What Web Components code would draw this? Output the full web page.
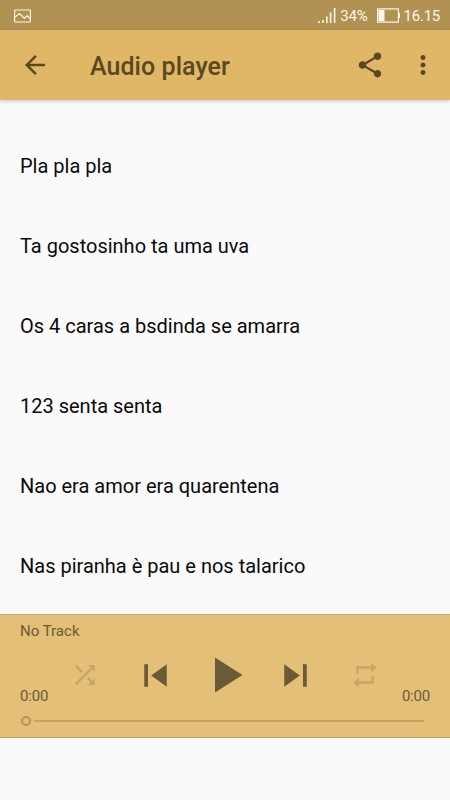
<!DOCTYPE html>
<html lang="pt">
<head>
<meta charset="utf-8">
<title>Audio player</title>
<style>
  body {
    margin: 0;
    background: #fafafa;
    font-family: Roboto, "Noto Sans", sans-serif;
  }
</style>
</head>
<body>
<audio-app>
  <status-bar slot="status" battery="34%" time="16.15"></status-bar>
  <app-toolbar slot="toolbar">Audio player</app-toolbar>
  <track-item>Pla pla pla</track-item>
  <track-item>Ta gostosinho ta uma uva</track-item>
  <track-item>Os 4 caras a bsdinda se amarra</track-item>
  <track-item>123 senta senta</track-item>
  <track-item>Nao era amor era quarentena</track-item>
  <track-item>Nas piranha è pau e nos talarico</track-item>
  <player-controls slot="player" elapsed="0:00" duration="0:00">No Track</player-controls>
</audio-app>

<script>
const ICONS = {
  back: "M20 11H7.83l5.59-5.59L12 4l-8 8 8 8 1.41-1.41L7.83 13H20v-2z",
  share: "M18 16.08c-.76 0-1.44.3-1.96.77L8.91 12.7c.05-.23.09-.46.09-.7s-.04-.47-.09-.7l7.05-4.11c.54.5 1.25.81 2.04.81 1.66 0 3-1.34 3-3s-1.34-3-3-3-3 1.34-3 3c0 .24.04.47.09.7L8.04 9.81C7.5 9.31 6.79 9 6 9c-1.66 0-3 1.34-3 3s1.34 3 3 3c.79 0 1.5-.31 2.04-.81l7.12 4.16c-.05.21-.08.43-.08.65 0 1.61 1.31 2.92 2.92 2.92s2.92-1.31 2.92-2.92-1.31-2.92-2.92-2.92z",
  more: "M12 8c1.1 0 2-.9 2-2s-.9-2-2-2-2 .9-2 2 .9 2 2 2zm0 2c-1.1 0-2 .9-2 2s.9 2 2 2 2-.9 2-2-.9-2-2-2zm0 6c-1.1 0-2 .9-2 2s.9 2 2 2 2-.9 2-2-.9-2-2-2z",
  shuffle: "M10.59 9.17L5.41 4 4 5.41l5.17 5.17 1.42-1.41zM14.5 4l2.04 2.04L4 18.59 5.41 20 17.96 7.46 20 9.5V4h-5.5zm.33 9.41l-1.41 1.41 3.13 3.13L14.5 20H20v-5.5l-2.04 2.04-3.13-3.13z",
  previous: "M6 6h2v12H6zm3.7 6l8.3 6V6z",
  play: "M8 5v14l11-7z",
  next: "M6 18l8.3-6L6 6v12zM16 6v12h2V6h-2z",
  repeat: "M7 7h10v3l4-4-4-4v3H5v6h2V7zm10 10H7v-3l-4 4 4 4v-3h12v-6h-2v4z"
};

class AppIcon extends HTMLElement {
  constructor() {
    super();
    this.attachShadow({mode: "open"});
  }
  connectedCallback() {
    const size = this.getAttribute("size") || 30;
    this.shadowRoot.innerHTML = `
      <style>
        :host { display: block; width: ${size}px; height: ${size}px; }
        svg { display: block; fill: currentColor; }
      </style>
      <svg width="${size}" height="${size}" viewBox="0 0 24 24">
        <path d="${ICONS[this.getAttribute("name")]}"/>
      </svg>
    `;
  }
}
customElements.define("app-icon", AppIcon);

class StatusBar extends HTMLElement {
  constructor() {
    super();
    this.attachShadow({mode: "open"});
  }
  connectedCallback() {
    this.shadowRoot.innerHTML = `
      <style>
        :host {
          display: flex;
          align-items: center;
          box-sizing: border-box;
          height: 30px;
          padding: 2px 10px 0 14px;
          background: #b29252;
          color: #fbf7ec;
          font-size: 15px;
          line-height: 28px;
        }
        svg { display: block; flex: none; margin-top: -1px; fill: none; stroke: currentColor; }
        .signal { margin-left: auto; }
        .battery { margin: -1px 4px 0 9px; }
        .level { margin-left: 4px; letter-spacing: -0.2px; }
        .time { letter-spacing: -0.25px; }
      </style>
      <svg width="17" height="14" viewBox="0 0 17 14">
        <rect x=".6" y="1" width="15.8" height="12" rx=".8" stroke-width="1.2"/>
        <path d="M1 8l4.500-3.500 5 5 2.500-2.800 3.400 3.200" stroke-width="1.200"/>
      </svg>
      <svg class="signal" width="18" height="16" viewBox="0 0 18 16">
        <path d="M1.200 13v2M5 12v3M8.800 8.500v6.500M12.600 4.500v10.500M16.600 0v15" stroke-width="1.600"/>
      </svg>
      <span class="level">${this.getAttribute("battery")}</span>
      <svg class="battery" width="23" height="15" viewBox="0 0 23 15">
        <rect x=".6" y=".9" width="20.800" height="13.200" stroke-width="1.200"/>
        <path d="M22.300 5v5" stroke-width="1.400"/>
        <path d="M1.500 2h6v11h-6z" fill="currentColor" stroke="none"/>
      </svg>
      <span class="time">${this.getAttribute("time")}</span>
    `;
  }
}
customElements.define("status-bar", StatusBar);

class AppToolbar extends HTMLElement {
  constructor() {
    super();
    this.attachShadow({mode: "open"});
  }
  connectedCallback() {
    this.shadowRoot.innerHTML = `
      <style>
        :host {
          display: flex;
          align-items: center;
          box-sizing: border-box;
          height: 70px;
          padding: 0 12px 0 20px;
          background: #e0b766;
          color: #5a4823;
          box-shadow: 0 1px 4px rgba(0, 0, 0, 0.22);
        }
        h1 {
          flex: 1;
          margin: 4px 0 0 40px;
          font-size: 25px;
          font-weight: 500;
          line-height: 30px;
          letter-spacing: 0.06px;
        }
        .more { margin-left: 23px; }
      </style>
      <app-icon name="back"></app-icon>
      <h1><slot></slot></h1>
      <app-icon name="share"></app-icon>
      <app-icon class="more" name="more"></app-icon>
    `;
  }
}
customElements.define("app-toolbar", AppToolbar);

class TrackItem extends HTMLElement {
  constructor() {
    super();
    this.attachShadow({mode: "open"});
  }
  connectedCallback() {
    this.shadowRoot.innerHTML = `
      <style>
        :host {
          display: flex;
          align-items: center;
          height: 80px;
          padding: 0 20px;
          color: #0a0a0a;
          font-size: 20px;
          line-height: 24px;
        }
      </style>
      <slot></slot>
    `;
  }
}
customElements.define("track-item", TrackItem);

class PlayerControls extends HTMLElement {
  constructor() {
    super();
    this.attachShadow({mode: "open"});
  }
  connectedCallback() {
    this.shadowRoot.innerHTML = `
      <style>
        :host {
          display: flex;
          flex-direction: column;
          box-sizing: border-box;
          height: 124px;
          padding: 0 20px;
          border-top: 1px solid #c9aa6c;
          border-bottom: 1px solid #c0a060;
          background: #e3bf77;
          color: #6b5a37;
          font-size: 15px;
          line-height: 18px;
        }
        .track { padding-top: 7px; height: 20px; }
        .row {
          display: grid;
          grid-template-columns: 30px repeat(5, 70px) 30px;
          align-items: center;
          height: 66px;
        }
        .row app-icon { justify-self: center; }
        .row .off { color: #c8a664; }
        .time { align-self: end; padding-bottom: 3px; letter-spacing: -0.2px; }
        .end { justify-self: end; }
        .seek {
          display: flex;
          align-items: center;
          gap: 3px;
          height: 26px;
          padding: 0 6px 0 1px;
        }
        .thumb {
          box-sizing: border-box;
          width: 10px;
          height: 10px;
          border: 2px solid #b3935a;
          border-radius: 50%;
        }
        .line { flex: 1; height: 2px; background: #c4a262; }
      </style>
      <div class="track"><slot></slot></div>
      <div class="row">
        <span class="time">${this.getAttribute("elapsed")}</span>
        <app-icon class="off" name="shuffle"></app-icon>
        <app-icon name="previous" size="45"></app-icon>
        <app-icon name="play" size="60"></app-icon>
        <app-icon name="next" size="45"></app-icon>
        <app-icon class="off" name="repeat"></app-icon>
        <span class="time end">${this.getAttribute("duration")}</span>
      </div>
      <div class="seek"><div class="thumb"></div><div class="line"></div></div>
    `;
  }
}
customElements.define("player-controls", PlayerControls);

class AudioApp extends HTMLElement {
  constructor() {
    super();
    this.attachShadow({mode: "open"});
  }
  connectedCallback() {
    this.shadowRoot.innerHTML = `
      <style>
        :host {
          display: flex;
          flex-direction: column;
          width: 450px;
          height: 800px;
          overflow: hidden;
        }
        main {
          flex: none;
          box-sizing: border-box;
          height: 514px;
          padding-top: 26px;
        }
      </style>
      <slot name="status"></slot>
      <slot name="toolbar"></slot>
      <main><slot></slot></main>
      <slot name="player"></slot>
    `;
  }
}
customElements.define("audio-app", AudioApp);
</script>
</body>
</html>
